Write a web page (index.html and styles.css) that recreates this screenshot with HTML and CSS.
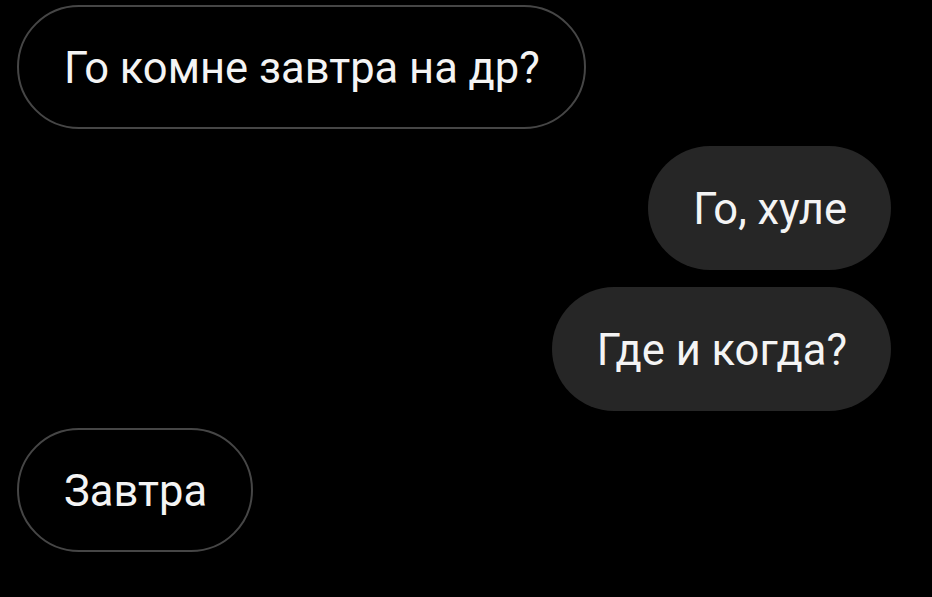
FILE: index.html
```html
<!DOCTYPE html>
<html lang="ru">
<head>
  <meta charset="UTF-8" />
  <meta name="viewport" content="width=device-width, initial-scale=1.0"/>
  <title>Чат</title>
  <link rel="stylesheet" href="styles.css">
</head>
<body>
  <div class="chat">
    <div class="bubble in">Го комне завтра на др?</div>
    <div class="bubble out">Го, хуле</div>
    <div class="bubble out">Где и когда?</div>
    <div class="bubble in">Завтра</div>
  </div>
</body>
</html>
```

FILE: styles.css
```css
body {
  margin: 0;
  padding: 0;
  background: #000;
  font-family: Roboto, "Noto Sans", sans-serif;
  color: #f4f4f4;
}

.chat {
  display: flex;
  flex-direction: column;
  gap: 17px;
  padding: 5px 41px 0 17px;
}

.bubble {
  box-sizing: border-box;
  height: 124px;
  display: flex;
  align-items: center;
  padding: 3px 44px 0 45px;
  border-radius: 62px;
  font-size: 43.5px;
  white-space: nowrap;
}

/* received */
.in {
  align-self: flex-start;
  border: 2px solid #464646;
}

/* sent */
.out {
  align-self: flex-end;
  background: #262626;
}
```
